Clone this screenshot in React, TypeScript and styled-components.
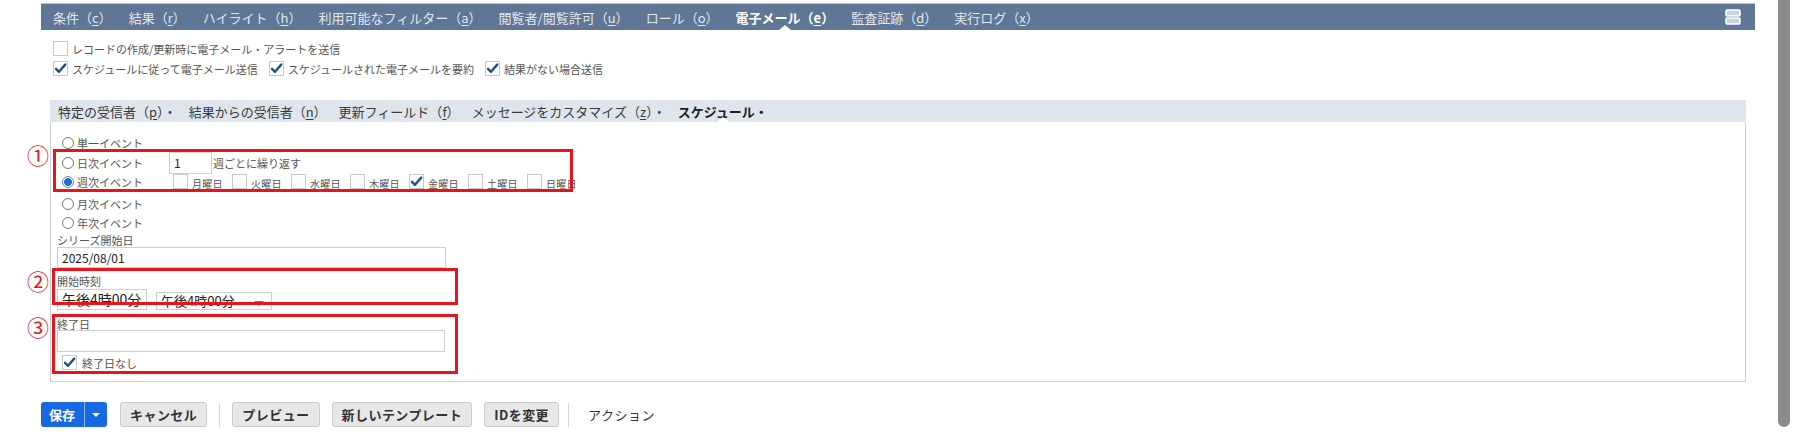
import styled, { createGlobalStyle, css } from "styled-components";

const GlobalStyle = createGlobalStyle`
  html, body {
    margin: 0;
    padding: 0;
    background: #fff;
  }
  body {
    font-family: "Noto Sans CJK JP", "Noto Sans", sans-serif;
    color: #333;
    overflow: hidden;
  }
`;

const Page = styled.div`
  padding: 3px 39px 0 41px;
`;

/* top navigation */
const NavBar = styled.nav`
  display: flex;
  align-items: center;
  height: 27px;
  background: #5f7696;
  border-top: 1px solid #b9c5d6;
  box-sizing: border-box;
  padding-left: 12px;
`;

const NavTab = styled.span<{ $active?: boolean }>`
  position: relative;
  display: flex;
  align-items: center;
  height: 100%;
  margin-right: 17px;
  font-size: 13px;
  white-space: nowrap;
  color: ${(p) => (p.$active ? "#fff" : "#e3e8f0")};
  font-weight: ${(p) => (p.$active ? 700 : 400)};
  u {
    text-underline-offset: 2px;
  }
  ${(p) =>
    p.$active &&
    css`
      &::after {
        content: "";
        position: absolute;
        left: 50%;
        bottom: 0;
        margin-left: -6px;
        border-left: 6px solid transparent;
        border-right: 6px solid transparent;
        border-bottom: 5px solid #fff;
      }
    `}
`;

const MenuIcon = styled.svg`
  margin-left: auto;
  margin-right: 14px;
`;

/* alert options */
const Options = styled.div`
  padding: 6px 0 0 12px;
`;

const OptRow = styled.div`
  display: flex;
  align-items: flex-end;
  height: 20px;
  font-size: 11px;
  color: #555;
`;

const OptLabel = styled.span`
  line-height: 13px;
  margin: 0 11px 0 4px;
  white-space: nowrap;
`;

const Box = styled.span`
  display: inline-flex;
  align-items: center;
  justify-content: center;
  flex: none;
  width: 15px;
  height: 15px;
  box-sizing: border-box;
  border: 1px solid #c9c9c9;
  background: #fff;
`;

const Check = ({ on }: { on?: boolean }) => (
  <Box>
    {on && (
      <svg width="13" height="13" viewBox="0 0 13 13">
        <path d="M2 6.8 L5 9.8 L11.2 2.6" fill="none" stroke="#1d4e8f" strokeWidth="2.4" strokeLinecap="round" strokeLinejoin="round" />
      </svg>
    )}
  </Box>
);

/* schedule panel */
const Panel = styled.section`
  margin: 24px 9px 0 9px;
`;

const SubTabs = styled.div`
  display: flex;
  align-items: center;
  height: 22px;
  background: #dfe5ed;
  padding-left: 8px;
`;

const SubTab = styled.span<{ $active?: boolean }>`
  position: relative;
  display: flex;
  align-items: center;
  height: 100%;
  margin-right: 12px;
  font-size: 13px;
  white-space: nowrap;
  color: ${(p) => (p.$active ? "#1e1e1e" : "#3a3a3a")};
  font-weight: ${(p) => (p.$active ? 700 : 400)};
  u {
    text-underline-offset: 2px;
  }
  ${(p) =>
    p.$active &&
    css`
      &::after {
        content: "";
        position: absolute;
        left: 50%;
        bottom: 0;
        margin-left: -6px;
        border-left: 6px solid transparent;
        border-right: 6px solid transparent;
        border-bottom: 5px solid #fff;
      }
    `}
`;

const Body = styled.div`
  border: 1px solid #cfcfcf;
  border-top: none;
  padding: 12px 0 11px 6px;
`;

const RadioRow = styled.div<{ $h?: number; $mt?: number }>`
  display: flex;
  align-items: center;
  height: ${(p) => p.$h ?? 18}px;
  margin-top: ${(p) => p.$mt ?? 0}px;
  padding-left: 5px;
  font-size: 11px;
  color: #555;
  white-space: nowrap;
`;

const Radio = styled.span<{ $on?: boolean }>`
  flex: none;
  width: 12px;
  height: 12px;
  margin-right: 3px;
  box-sizing: border-box;
  border-radius: 50%;
  border: 1px solid ${(p) => (p.$on ? "#6f87ad" : "#777")};
  background: ${(p) =>
    p.$on ? "radial-gradient(circle, #1a6fe3 0 3.6px, #fff 4.2px)" : "#fff"};
`;

/* red call-out frames drawn over a group of fields */
const Marked = styled.div<{ $top: number; $left: number; $w: number; $h: number; $pt?: number }>`
  position: relative;
  padding-top: ${(p) => p.$pt ?? 0}px;
  &::after {
    content: "";
    position: absolute;
    top: ${(p) => p.$top}px;
    left: ${(p) => p.$left}px;
    width: ${(p) => p.$w}px;
    height: ${(p) => p.$h}px;
    box-sizing: border-box;
    border: 3px solid #e8141b;
    pointer-events: none;
    z-index: 2;
  }
`;

const Badge = styled.span<{ $top: number }>`
  position: absolute;
  left: -30px;
  top: ${(p) => p.$top}px;
  font-size: 22px;
  line-height: 22px;
  color: #e8141b;
`;

const EventGrid = styled.div<{ $h: number; $mt?: number }>`
  display: grid;
  grid-template-columns: 112px 1fr;
  align-items: center;
  height: ${(p) => p.$h}px;
  margin-top: ${(p) => p.$mt ?? 0}px;
`;

const Inline = styled.div`
  display: flex;
  align-items: center;
  font-size: 11px;
  color: #555;
  span {
    margin-left: 1px;
  }
`;

const Days = styled.div`
  display: flex;
  align-items: flex-end;
  height: 15px;
`;

const Day = styled.span`
  display: flex;
  align-items: flex-end;
  width: 59px;
  font-size: 10px;
  line-height: 11px;
  color: #555;
  span {
    margin-left: 4px;
    letter-spacing: 0.3px;
  }
`;

const FieldLabel = styled.div<{ $mt?: number }>`
  height: 14px;
  margin-top: ${(p) => p.$mt ?? 0}px;
  font-size: 11px;
  line-height: 14px;
  color: #555;
`;

const Field = styled.div<{ $w: number; $h: number; $size?: number; $mt?: number }>`
  position: relative;
  width: ${(p) => p.$w}px;
  height: ${(p) => p.$h}px;
  margin-top: ${(p) => p.$mt ?? 0}px;
  box-sizing: border-box;
  border: 1px solid #cfcfcf;
  background: #fff;
  padding-left: 4px;
  font-size: ${(p) => p.$size ?? 12}px;
  line-height: ${(p) => p.$h - 2}px;
  color: #222;
  white-space: nowrap;
  overflow: hidden;
`;

const TimeRow = styled.div`
  display: flex;
  align-items: flex-end;
  gap: 9px;
  margin-top: 1px;
`;

const Caret = styled.span`
  position: absolute;
  right: 7px;
  top: 8px;
  border-left: 5px solid transparent;
  border-right: 5px solid transparent;
  border-top: 5px solid #6b7fa6;
`;

const CheckRow = styled.div`
  display: flex;
  align-items: flex-end;
  height: 16px;
  margin-top: 2px;
  font-size: 11px;
  color: #555;
  span {
    margin-left: 5px;
    line-height: 13px;
  }
`;

/* footer buttons */
const ButtonBar = styled.div`
  display: flex;
  align-items: center;
  gap: 12px;
  margin-top: 20px;
`;

const SaveGroup = styled.div`
  display: flex;
  height: 25px;
  margin-right: 1px;
  border-radius: 3px;
  background: #1769e3;
  color: #fff;
  overflow: hidden;
`;

const SaveMain = styled.span`
  display: flex;
  align-items: center;
  padding: 0 9px 0 8px;
  font-size: 13px;
  font-weight: 700;
`;

const SaveCaret = styled.span`
  display: flex;
  align-items: center;
  justify-content: center;
  width: 22px;
  border-left: 1px solid rgba(255, 255, 255, 0.5);
  &::before {
    content: "";
    border-left: 4px solid transparent;
    border-right: 4px solid transparent;
    border-top: 4px solid #fff;
  }
`;

const Button = styled.span`
  display: flex;
  align-items: center;
  height: 25px;
  padding: 0 9px;
  box-sizing: border-box;
  border: 1px solid #cbcbcb;
  border-radius: 3px;
  background: #e7e7e7;
  font-size: 13px;
  font-weight: 700;
  letter-spacing: 0.45px;
  color: #333;
  white-space: nowrap;
`;

const Divider = styled.span<{ $ml?: number }>`
  width: 1px;
  height: 24px;
  margin-left: ${(p) => p.$ml ?? 0}px;
  background: #d8d8d8;
`;

const ActionText = styled.span`
  margin-left: 7px;
  font-size: 13px;
  letter-spacing: 0.5px;
  color: #333;
`;

const Scrollbar = styled.div`
  position: fixed;
  top: -6px;
  right: 4px;
  width: 12px;
  height: 433px;
  border-radius: 6px;
  background: #8b8b8b;
`;

const navTabs = [
  { label: "条件", key: "c" },
  { label: "結果", key: "r" },
  { label: "ハイライト", key: "h" },
  { label: "利用可能なフィルター", key: "a" },
  { label: "閲覧者/閲覧許可", key: "u" },
  { label: "ロール", key: "o" },
  { label: "電子メール", key: "e", active: true },
  { label: "監査証跡", key: "d" },
  { label: "実行ログ", key: "x" },
];

const subTabs = [
  { label: "特定の受信者", key: "p", dot: true },
  { label: "結果からの受信者", key: "n" },
  { label: "更新フィールド", key: "f" },
  { label: "メッセージをカスタマイズ", key: "z", dot: true },
  { label: "スケジュール", dot: true, active: true },
];

const days = [
  { label: "月曜日" },
  { label: "火曜日" },
  { label: "水曜日" },
  { label: "木曜日" },
  { label: "金曜日", on: true },
  { label: "土曜日" },
  { label: "日曜日" },
];

export default function App() {
  return (
    <>
      <GlobalStyle />
      <Page>
        <NavBar>
          {navTabs.map((t) => (
            <NavTab key={t.key} $active={t.active}>
              {t.label}（<u>{t.key}</u>）
            </NavTab>
          ))}
          <MenuIcon width="16" height="16" viewBox="0 0 16 16">
            <rect x="1" y="1" width="14" height="6" rx="1" fill="#c9d3e1" stroke="#fff" strokeWidth="1.6" />
            <rect x="1" y="9" width="14" height="6" rx="1" fill="#c9d3e1" stroke="#fff" strokeWidth="1.6" />
          </MenuIcon>
        </NavBar>

        <Options>
          <OptRow>
            <Check />
            <OptLabel>レコードの作成/更新時に電子メール・アラートを送信</OptLabel>
          </OptRow>
          <OptRow>
            <Check on />
            <OptLabel>スケジュールに従って電子メール送信</OptLabel>
            <Check on />
            <OptLabel>スケジュールされた電子メールを要約</OptLabel>
            <Check on />
            <OptLabel>結果がない場合送信</OptLabel>
          </OptRow>
        </Options>

        <Panel>
          <SubTabs>
            {subTabs.map((t) => (
              <SubTab key={t.label} $active={t.active}>
                {t.label}
                {t.key && (
                  <>
                    （<u>{t.key}</u>）
                  </>
                )}
                {t.dot && "・"}
              </SubTab>
            ))}
          </SubTabs>
          <Body>
            <RadioRow>
              <Radio />
              単一イベント
            </RadioRow>

            <Marked $top={-3} $left={-4} $w={520} $h={43}>
              <Badge $top={-9}>①</Badge>
              <EventGrid $h={22}>
                <RadioRow $h={22}>
                  <Radio />
                  日次イベント
                </RadioRow>
                <Inline>
                  <Field $w={43} $h={22}>1</Field>
                  <span>週ごとに繰り返す</span>
                </Inline>
              </EventGrid>
              <EventGrid $h={15} $mt={0}>
                <RadioRow $h={15}>
                  <Radio $on />
                  週次イベント
                </RadioRow>
                <Days>
                  {days.map((d) => (
                    <Day key={d.label}>
                      <Check on={d.on} />
                      <span>{d.label}</span>
                    </Day>
                  ))}
                </Days>
              </EventGrid>
            </Marked>

            <RadioRow $mt={6}>
              <Radio />
              月次イベント
            </RadioRow>
            <RadioRow $mt={1}>
              <Radio />
              年次イベント
            </RadioRow>

            <FieldLabel $mt={1}>シリーズ開始日</FieldLabel>
            <Field $w={389} $h={21}>2025/08/01</Field>

            <Marked $top={0} $left={-5} $w={406} $h={37} $pt={6}>
              <Badge $top={1}>②</Badge>
              <FieldLabel>開始時刻</FieldLabel>
              <TimeRow>
                <Field $w={90} $h={21} $size={14}>午後4時00分</Field>
                <Field $w={116} $h={18} $size={13}>
                  午後4時00分
                  <Caret />
                </Field>
              </TimeRow>
            </Marked>

            <Marked $top={4} $left={-5} $w={406} $h={60} $pt={7}>
              <Badge $top={5}>③</Badge>
              <FieldLabel>終了日</FieldLabel>
              <Field $w={388} $h={22} $mt={-1} />
              <CheckRow>
                <Check on />
                <span>終了日なし</span>
              </CheckRow>
            </Marked>
          </Body>
        </Panel>

        <ButtonBar>
          <SaveGroup>
            <SaveMain>保存</SaveMain>
            <SaveCaret />
          </SaveGroup>
          <Button>キャンセル</Button>
          <Divider />
          <Button>プレビュー</Button>
          <Button>新しいテンプレート</Button>
          <Button>IDを変更</Button>
          <Divider $ml={-3} />
          <ActionText>アクション</ActionText>
        </ButtonBar>
      </Page>
      <Scrollbar />
    </>
  );
}
